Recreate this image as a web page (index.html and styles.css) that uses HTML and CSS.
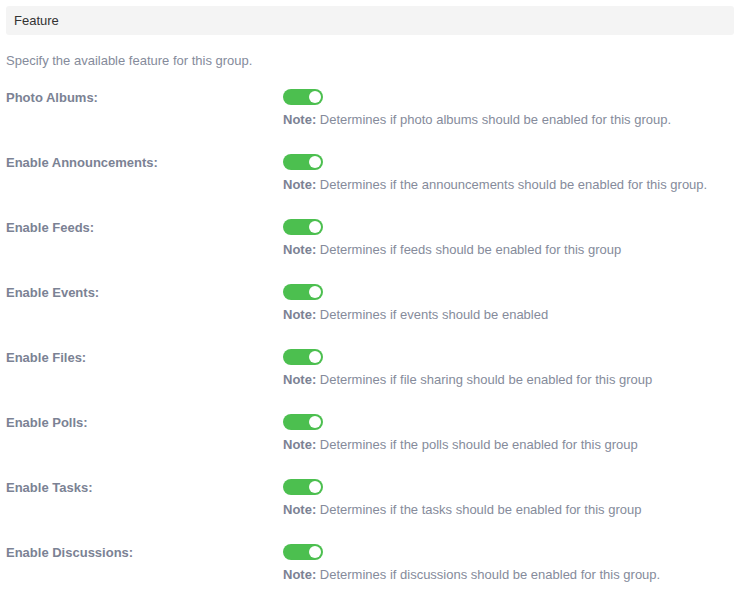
FILE: index.html
```html
<!DOCTYPE html>
<html>
<head>
<meta charset="utf-8">
<link rel="stylesheet" href="styles.css">
</head>
<body>
<div class="panel">
  <div class="panel-head">Feature</div>
  <p class="desc">Specify the available feature for this group.</p>
  <div class="rows">
    <div class="row">
      <div class="label">Photo Albums:</div>
      <div class="control"><span class="toggle"><span class="knob"></span></span>
        <div class="note"><b>Note:</b> Determines if photo albums should be enabled for this group.</div></div>
    </div>
    <div class="row">
      <div class="label">Enable Announcements:</div>
      <div class="control"><span class="toggle"><span class="knob"></span></span>
        <div class="note"><b>Note:</b> Determines if the announcements should be enabled for this group.</div></div>
    </div>
    <div class="row">
      <div class="label">Enable Feeds:</div>
      <div class="control"><span class="toggle"><span class="knob"></span></span>
        <div class="note"><b>Note:</b> Determines if feeds should be enabled for this group</div></div>
    </div>
    <div class="row">
      <div class="label">Enable Events:</div>
      <div class="control"><span class="toggle"><span class="knob"></span></span>
        <div class="note"><b>Note:</b> Determines if events should be enabled</div></div>
    </div>
    <div class="row">
      <div class="label">Enable Files:</div>
      <div class="control"><span class="toggle"><span class="knob"></span></span>
        <div class="note"><b>Note:</b> Determines if file sharing should be enabled for this group</div></div>
    </div>
    <div class="row">
      <div class="label">Enable Polls:</div>
      <div class="control"><span class="toggle"><span class="knob"></span></span>
        <div class="note"><b>Note:</b> Determines if the polls should be enabled for this group</div></div>
    </div>
    <div class="row">
      <div class="label">Enable Tasks:</div>
      <div class="control"><span class="toggle"><span class="knob"></span></span>
        <div class="note"><b>Note:</b> Determines if the tasks should be enabled for this group</div></div>
    </div>
    <div class="row">
      <div class="label">Enable Discussions:</div>
      <div class="control"><span class="toggle"><span class="knob"></span></span>
        <div class="note"><b>Note:</b> Determines if discussions should be enabled for this group.</div></div>
    </div>
  </div>
</div>
</body>
</html>
```
FILE: styles.css
```css
html, body {
  margin: 0;
  padding: 0;
  background: #ffffff;
}
body {
  font-family: "Liberation Sans", Arial, sans-serif;
  font-size: 13px;
  color: #7c8395;
}
.panel {
  padding: 6px 0 0 6px;
}
.panel-head {
  background: #f4f4f4;
  border-radius: 3px;
  height: 29px;
  line-height: 29px;
  padding-left: 8px;
  font-size: 13px;
  color: #333333;
}
.desc {
  margin: 18px 0 0 0;
  line-height: 16px;
  font-size: 13px;
  color: #858b9b;
}
.rows {
  margin-top: 20px;
  display: flex;
  flex-direction: column;
  gap: 26px;
}
.row {
  display: grid;
  grid-template-columns: 277px 1fr;
}
.label {
  font-weight: bold;
  font-size: 13px;
  line-height: 16px;
  padding-top: 1px;
  color: #7b8294;
}
.control {
  display: flex;
  flex-direction: column;
  align-items: flex-start;
  gap: 7px;
}
.toggle {
  width: 40px;
  height: 16px;
  border-radius: 8px;
  background: #4cbf4f;
  display: flex;
  align-items: center;
  justify-content: flex-end;
  padding-right: 2px;
  box-sizing: border-box;
}
.knob {
  width: 12px;
  height: 12px;
  border-radius: 50%;
  background: #ffffff;
}
.note {
  line-height: 16px;
  font-size: 13px;
  color: #858b9b;
}
.note b {
  color: #7b8294;
}
```
